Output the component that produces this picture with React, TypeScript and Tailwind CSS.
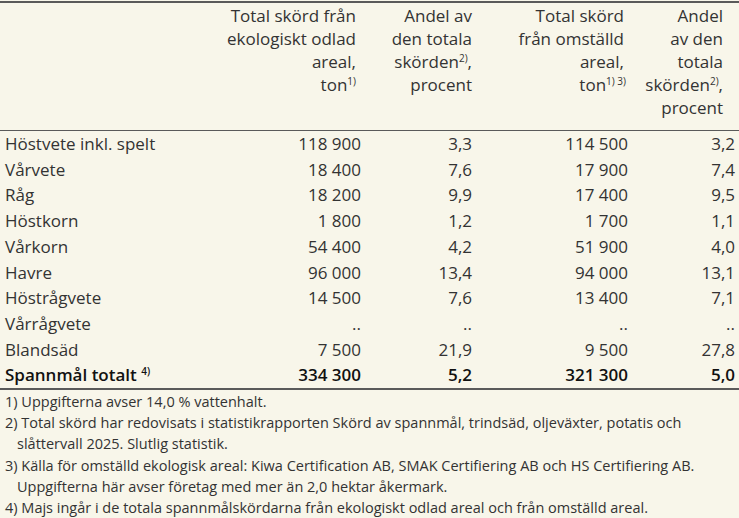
const rows: [string, string, string, string, string][] = [
  ["Höstvete inkl. spelt", "118 900", "3,3", "114 500", "3,2"],
  ["Vårvete", "18 400", "7,6", "17 900", "7,4"],
  ["Råg", "18 200", "9,9", "17 400", "9,5"],
  ["Höstkorn", "1 800", "1,2", "1 700", "1,1"],
  ["Vårkorn", "54 400", "4,2", "51 900", "4,0"],
  ["Havre", "96 000", "13,4", "94 000", "13,1"],
  ["Höstrågvete", "14 500", "7,6", "13 400", "7,1"],
  ["Vårrågvete", "..", "..", "..", ".."],
  ["Blandsäd", "7 500", "21,9", "9 500", "27,8"],
];

const grid = "grid grid-cols-[210px_146px_111px_156px_107px] pl-[5px]";

function Sup({ children }: { children: React.ReactNode }) {
  return <sup className="text-[10px] leading-none -top-[6px]">{children}</sup>;
}

export default function App() {
  return (
    <div className="w-[739px] h-[518px] bg-[#f8f6ea] pt-px text-[#333] font-['Open_Sans',sans-serif]">
      <div className="border-t-2 border-b-2 border-[#5a5a5a]">
        {/* Header */}
        <div className={`${grid} h-[128px] pt-px border-b-[1.5px] border-[#5a5a5a] text-[17px] leading-[23px] text-right`}>
          <div />
          <div className="pr-[5px]">
            <div>Total skörd från</div>
            <div>ekologiskt odlad</div>
            <div>areal,</div>
            <div>
              ton<Sup>1)</Sup>
            </div>
          </div>
          <div>
            <div>Andel av</div>
            <div>den totala</div>
            <div>
              skörden<Sup>2)</Sup>,
            </div>
            <div>procent</div>
          </div>
          <div className="pr-[4px]">
            <div>Total skörd</div>
            <div>från omställd</div>
            <div>areal,</div>
            <div className="-mr-[2px]">
              ton<Sup>1) 3)</Sup>
            </div>
          </div>
          <div className="pr-[12px]">
            <div>Andel</div>
            <div>av den</div>
            <div>totala</div>
            <div>
              skörden<Sup>2)</Sup>,
            </div>
            <div>procent</div>
          </div>
        </div>

        {/* Body */}
        <div className="text-[17px] leading-[25.7px]">
          {rows.map((r) => (
            <div key={r[0]} className={grid}>
              <div>{r[0]}</div>
              <div className="text-right">{r[1]}</div>
              <div className="text-right">{r[2]}</div>
              <div className="text-right">{r[3]}</div>
              <div className="text-right">{r[4]}</div>
            </div>
          ))}
          <div className={`${grid} font-semibold text-[#111]`}>
            <div>
              Spannmål totalt <Sup>4)</Sup>
            </div>
            <div className="text-right">334 300</div>
            <div className="text-right">5,2</div>
            <div className="text-right">321 300</div>
            <div className="text-right">5,0</div>
          </div>
        </div>
      </div>

      {/* Footnotes */}
      <div className="pt-px text-[14.5px] leading-[21.2px]">
        <p className="pl-[17px] -indent-[12px]">1) Uppgifterna avser 14,0 % vattenhalt.</p>
        <p className="pl-[17px] -indent-[12px]">
          2) Total skörd har redovisats i statistikrapporten Skörd av spannmål, trindsäd, oljeväxter, potatis och
          <br />
          slåttervall 2025. Slutlig statistik.
        </p>
        <p className="pl-[17px] -indent-[12px]">
          3) Källa för omställd ekologisk areal: Kiwa Certification AB, SMAK Certifiering AB och HS Certifiering AB.
          <br />
          Uppgifterna här avser företag med mer än 2,0 hektar åkermark.
        </p>
        <p className="pl-[17px] -indent-[12px]">
          4) Majs ingår i de totala spannmålskördarna från ekologiskt odlad areal och från omställd areal.
        </p>
      </div>
    </div>
  );
}
